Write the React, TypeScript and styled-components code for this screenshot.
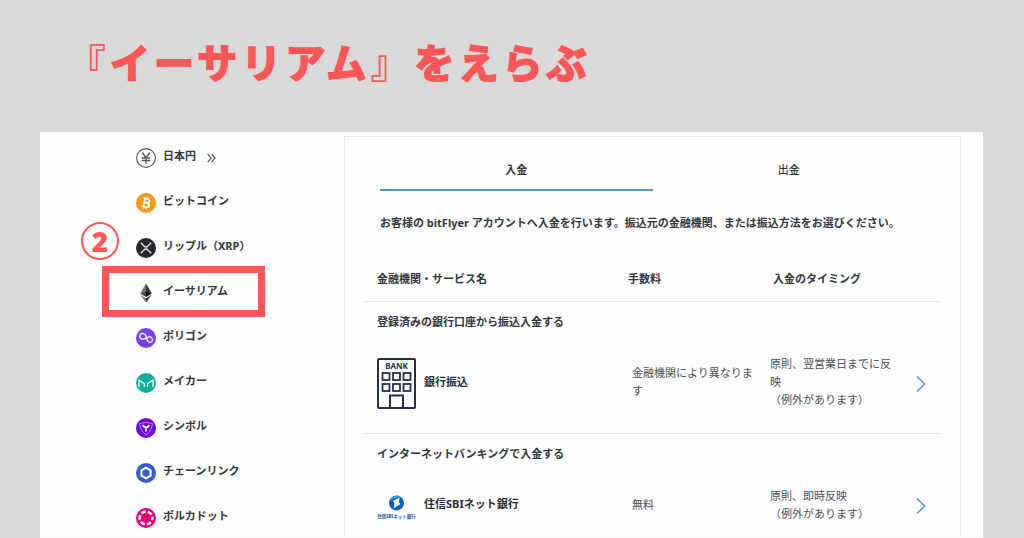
import React from "react";
import styled, { createGlobalStyle } from "styled-components";

const red = "#ff5757";
const ink = "#33373c";

const GlobalStyle = createGlobalStyle`
  * { box-sizing: border-box; }
  html, body { margin: 0; padding: 0; background: #d9d9d9; }
  body {
    font-family: "Noto Sans", "Noto Sans CJK JP", sans-serif;
    font-size: 11px;
    line-height: 18px;
    color: ${ink};
  }
`;

const Page = styled.div`
  padding: 0 41px 0 40px;
`;

const Title = styled.h1`
  margin: 0;
  padding: 33px 0 0 26px;
  height: 132px;
  font-family: "Noto Sans CJK JP", sans-serif;
  font-size: 40px;
  line-height: 56px;
  font-weight: 700;
  letter-spacing: 4px;
  color: ${red};
  -webkit-text-stroke: 2px ${red};
`;

const Bracket = styled.span`
  -webkit-text-stroke: 0;
`;

const Panel = styled.main`
  display: grid;
  grid-template-columns: 304px 1fr;
  padding: 4px 22px 0 0;
  background: #fefefe;
  border-bottom: 1px solid #efefef;
`;

const CoinList = styled.ul`
  list-style: none;
  margin: 0;
  padding: 0 0 0 62px;
`;

const CoinItem = styled.li`
  position: relative;
  width: 163px;
  height: 45px;

  &:last-child {
    height: 41px;
  }
`;

const CoinLink = styled.a`
  display: flex;
  align-items: center;
  gap: 7px;
  height: 40px;
  padding-left: 34px;
  font-weight: 700;
  color: ${ink};
  text-decoration: none;
`;

const CoinIcon = styled.svg`
  flex: none;
  width: 20px;
  height: 20px;
  margin-top: 3px;
`;

const More = styled.svg`
  width: 9px;
  height: 10px;
  margin: 3px 0 0 4px;
`;

const Highlight = styled.span`
  position: absolute;
  inset: -5px 0 -1px;
  border: 7px solid ${red};
  pointer-events: none;
`;

const StepBadge = styled.span`
  position: absolute;
  left: -21px;
  top: -49px;
  width: 38px;
  height: 38px;
  border: 2px solid ${red};
  border-radius: 50%;
  background: #fff;
  color: ${red};
  font-size: 28px;
  line-height: 34px;
  font-weight: 900;
  text-align: center;
`;

const Card = styled.section`
  border: 1px solid #e9e9e9;
  border-bottom: 0;
  padding: 14px 19px 0;
`;

const Tabs = styled.div`
  display: flex;
  padding: 0 16px;
`;

const Tab = styled.button<{ $active?: boolean }>`
  flex: 1;
  height: 40px;
  padding: 0;
  border: 0;
  border-bottom: 2px solid ${(p) => (p.$active ? "#5592cb" : "transparent")};
  background: none;
  font: inherit;
  font-weight: ${(p) => (p.$active ? 700 : 500)};
  color: ${ink};
`;

const Lead = styled.p`
  margin: 23px 0 24px;
  padding: 0 16px;
  font-weight: 700;
  white-space: nowrap;
`;

const Table = styled.table`
  width: 100%;
  table-layout: fixed;
  border-collapse: separate;
  border-spacing: 0;
`;

const HeadCell = styled.th<{ $width?: number; $left: number }>`
  width: ${(p) => (p.$width ? `${p.$width}px` : "auto")};
  height: 46px;
  padding: 0 0 0 ${(p) => p.$left}px;
  border-bottom: 1px solid #e8e8e8;
  text-align: left;
  font-weight: 700;
`;

const GroupCell = styled.th`
  height: 40px;
  padding: 0 0 0 13px;
  text-align: left;
  font-weight: 700;
`;

const Cell = styled.td<{ $left: number; $bottom: number; $last?: boolean }>`
  padding: 0 0 ${(p) => p.$bottom}px ${(p) => p.$left}px;
  border-bottom: ${(p) => (p.$last ? "0" : "1px solid #e8e8e8")};
  vertical-align: middle;
  color: #4a4e55;
`;

const Row = styled.tr<{ $height: number }>`
  height: ${(p) => p.$height}px;
`;

const BankLink = styled.a`
  display: flex;
  align-items: center;
  gap: 8px;
  font-weight: 700;
  color: #262c3a;
  text-decoration: none;
`;

const BankName = styled.span`
  padding-bottom: 4px;
`;

const BankLogo = styled.svg<{ $height: number }>`
  flex: none;
  width: 39px;
  height: ${(p) => p.$height}px;
  overflow: visible;
`;

const GoButton = styled.button`
  display: block;
  padding: 0;
  border: 0;
  background: none;
  line-height: 0;
`;

const coins: { name: string; more?: boolean; chosen?: boolean; icon: React.ReactNode }[] = [
  {
    name: "日本円",
    more: true,
    icon: (
      <g fill="none" stroke="#50545a" strokeLinecap="round">
        <circle cx="10" cy="10" r="9.4" strokeWidth="1.1" />
        <path d="M6.6 5 L10 9.6 L13.4 5 M10 9.6 V15.6 M6.2 10 H13.8 M6.2 12.5 H13.8" strokeWidth="1.3" />
      </g>
    ),
  },
  {
    name: "ビットコイン",
    icon: (
      <g>
        <circle cx="10" cy="10" r="10" fill="#f29a13" />
        <g transform="rotate(13 10 10)" fill="none" stroke="#fff">
          <path d="M8.2 5.9 V14.1 M6.4 5.9 H10.8 C13.6 5.9 13.6 9.8 10.8 9.8 H8.2 M10.8 9.8 C14.4 9.8 14.4 14.1 10.8 14.1 H6.4" strokeWidth="1.8" />
          <path d="M8.9 4 V6 M11.1 4 V6 M8.9 14 V16 M11.1 14 V16" strokeWidth="1.2" />
        </g>
      </g>
    ),
  },
  {
    name: "リップル（XRP）",
    icon: (
      <g>
        <circle cx="10" cy="10" r="10" fill="#23292f" />
        <path d="M4.8 4.8 L8 8 Q10 9.9 12 8 L15.2 4.8 M4.8 15.2 L8 12 Q10 10.1 12 12 L15.2 15.2" fill="none" stroke="#e8e8e8" strokeWidth="1.4" />
      </g>
    ),
  },
  {
    name: "イーサリアム",
    chosen: true,
    icon: (
      <g>
        <path d="M10 .5 L4.2 10.4 L10 7.8 Z" fill="#777" />
        <path d="M10 .5 L15.8 10.4 L10 7.8 Z" fill="#333" />
        <path d="M4.2 10.4 L10 7.8 V13.9 Z" fill="#444" />
        <path d="M15.8 10.4 L10 7.8 V13.9 Z" fill="#111" />
        <path d="M4.2 11.8 L10 15.2 V19.6 Z" fill="#777" />
        <path d="M15.8 11.8 L10 15.2 V19.6 Z" fill="#333" />
      </g>
    ),
  },
  {
    name: "ポリゴン",
    icon: (
      <g>
        <circle cx="10" cy="10" r="10" fill="#7b3fe4" />
        <path d="M10.4 9.2 L8.9 10.7 L6.7 11.4 L4.3 10.2 L3.7 8 L4.9 5.9 L7 5.3 L9.2 6.5 L10.4 9.2 L11.6 12.8 L13.6 14.6 L15.9 13.7 L16.6 11.7 L15.4 9.4 L13.2 8.7 L11 9.7 L9.8 11.6" fill="none" stroke="#f2eaff" strokeWidth="1.4" strokeLinejoin="round" />
      </g>
    ),
  },
  {
    name: "メイカー",
    icon: (
      <g>
        <circle cx="10" cy="10" r="10" fill="#1aab9b" />
        <path d="M3 13.9 V7 L8.4 10.8 V13.9 M17 13.9 V7 L11.6 10.8 V13.9" fill="none" stroke="#e6fffb" strokeWidth="1.3" strokeLinejoin="round" />
      </g>
    ),
  },
  {
    name: "シンボル",
    icon: (
      <g>
        <circle cx="10" cy="10" r="10" fill="#6f06dd" />
        <path d="M3.6 5.5 Q10 3.3 16.4 5.5 Q16 12.6 10 16.8 Q4 12.6 3.6 5.5 Z" fill="none" stroke="#c79af5" strokeWidth=".9" />
        <path d="M7 6.8 Q7.4 9.3 10 9.3 Q12.6 9.3 13 6.8 M10 9 V13.4" fill="none" stroke="#fff" strokeWidth="1.7" />
      </g>
    ),
  },
  {
    name: "チェーンリンク",
    icon: (
      <g>
        <circle cx="10" cy="10" r="10" fill="#375bd2" />
        <path d="M10 4.7 L14.6 7.3 V12.7 L10 15.3 L5.4 12.7 V7.3 Z" fill="none" stroke="#fff" strokeWidth="2" />
      </g>
    ),
  },
  {
    name: "ポルカドット",
    icon: (
      <g>
        <circle cx="10" cy="10" r="10" fill="#e6007a" />
        <circle cx="10" cy="10" r="6.4" fill="none" stroke="#fff" strokeWidth="2.5" strokeDasharray="4.5 2.2" strokeDashoffset="2.25" />
      </g>
    ),
  },
];

const BankBuilding = () => (
  <BankLogo $height={51} viewBox="0 0 39 51" aria-hidden="true">
    <g fill="none" stroke="#26324a" strokeWidth="2">
      <rect x="1" y="1" width="37" height="49" rx="1" />
      {[15, 26].map((y) =>
        [5.5, 16, 26.5].map((x) => <rect key={`${x}-${y}`} x={x} y={y} width="7" height="7" strokeWidth="1.8" />)
      )}
      <path d="M13 50 V37.5 H26 V50" />
    </g>
    <text x="19.5" y="11" textAnchor="middle" fontSize="8" fontWeight="700" fill="#26324a">
      BANK
    </text>
  </BankLogo>
);

const SbiLogo = () => (
  <BankLogo $height={26} viewBox="0 0 78 52" aria-hidden="true">
    <circle cx="39" cy="20" r="15" fill="#0a5fb8" />
    <path d="M24.6 17 A15 15 0 0 1 50 9.8 Q36 6 24.6 17 Z" fill="#35a5e5" />
    <path d="M32 15.6 L45.2 9.4 L43.6 19 L47.2 22 L33.2 30.6 L34.8 21.4 Z" fill="#fff" />
    <text x="39" y="49" textAnchor="middle" fontSize="9" fontWeight="700" fill="#2b4fa5">
      住信SBIネット銀行
    </text>
  </BankLogo>
);

const Go = ({ label }: { label: string }) => (
  <GoButton type="button" aria-label={label}>
    <svg width="10" height="18" viewBox="0 0 10 18" fill="none" stroke="#5b9bd5" strokeWidth="1.6">
      <path d="M1 1.5 L8.6 9 L1 16.5" />
    </svg>
  </GoButton>
);

export default function App() {
  return (
    <>
      <GlobalStyle />
      <Page>
        <Title>
          <Bracket>『</Bracket>イーサリアム<Bracket>』</Bracket>をえらぶ
        </Title>
        <Panel>
          <nav aria-label="通貨">
            <CoinList>
              {coins.map((coin) => (
                <CoinItem key={coin.name}>
                  <CoinLink href="#">
                    <CoinIcon viewBox="0 0 20 20" aria-hidden="true">
                      {coin.icon}
                    </CoinIcon>
                    {coin.name}
                    {coin.more && (
                      <More viewBox="0 0 9 10" fill="none" stroke="#50545a" strokeWidth="1.2" aria-hidden="true">
                        <path d="M.7 .8 L4.2 5 L.7 9.2 M4.5 .8 L8 5 L4.5 9.2" />
                      </More>
                    )}
                  </CoinLink>
                  {coin.chosen && (
                    <>
                      <Highlight />
                      <StepBadge>2</StepBadge>
                    </>
                  )}
                </CoinItem>
              ))}
            </CoinList>
          </nav>
          <Card>
            <Tabs role="tablist">
              <Tab type="button" role="tab" aria-selected="true" $active>
                入金
              </Tab>
              <Tab type="button" role="tab" aria-selected="false">
                出金
              </Tab>
            </Tabs>
            <Lead>お客様の bitFlyer アカウントへ入金を行います。振込元の金融機関、または振込方法をお選びください。</Lead>
            <Table>
              <thead>
                <tr>
                  <HeadCell $left={13}>金融機関・サービス名</HeadCell>
                  <HeadCell $left={12} $width={141}>手数料</HeadCell>
                  <HeadCell $left={16} $width={143}>入金のタイミング</HeadCell>
                  <HeadCell $left={0} $width={41} />
                </tr>
              </thead>
              <tbody>
                <tr>
                  <GroupCell colSpan={4}>登録済みの銀行口座から振込入金する</GroupCell>
                </tr>
                <Row $height={92}>
                  <Cell $left={13} $bottom={8}>
                    <BankLink href="#">
                      <BankBuilding />
                      <BankName>銀行振込</BankName>
                    </BankLink>
                  </Cell>
                  <Cell $left={16} $bottom={12}>金融機関により異なります</Cell>
                  <Cell $left={13} $bottom={12}>
                    原則、翌営業日までに反映
                    <br />
                    （例外があります）
                  </Cell>
                  <Cell $left={16} $bottom={8}>
                    <Go label="銀行振込" />
                  </Cell>
                </Row>
                <tr>
                  <GroupCell colSpan={4}>インターネットバンキングで入金する</GroupCell>
                </tr>
                <Row $height={63}>
                  <Cell $left={13} $bottom={0} $last>
                    <BankLink href="#">
                      <SbiLogo />
                      <BankName>住信SBIネット銀行</BankName>
                    </BankLink>
                  </Cell>
                  <Cell $left={16} $bottom={2} $last>無料</Cell>
                  <Cell $left={13} $bottom={2} $last>
                    原則、即時反映
                    <br />
                    （例外があります）
                  </Cell>
                  <Cell $left={16} $bottom={0} $last>
                    <Go label="住信SBIネット銀行" />
                  </Cell>
                </Row>
              </tbody>
            </Table>
          </Card>
        </Panel>
      </Page>
    </>
  );
}
